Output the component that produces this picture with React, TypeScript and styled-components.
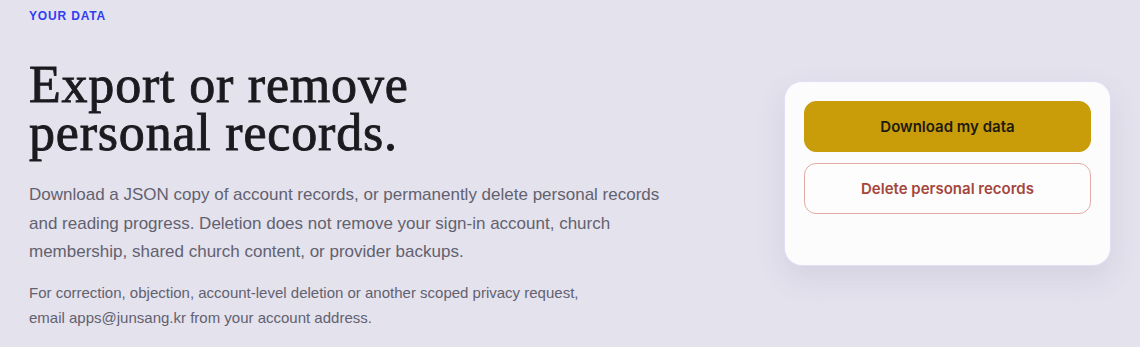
import React from "react";
import styled, { createGlobalStyle } from "styled-components";

const GlobalStyle = createGlobalStyle`
  html, body {
    margin: 0;
    padding: 0;
    background: #e4e2ed;
  }
  * { box-sizing: border-box; }
`;

const Page = styled.main`
  display: flex;
  justify-content: space-between;
  align-items: flex-start;
  padding: 8px 29px 0 29px;
  min-height: 347px;
  background: #e4e2ed;
`;

const Intro = styled.section`
  display: flex;
  flex-direction: column;
  width: 660px;
`;

const Eyebrow = styled.div`
  font-family: "Liberation Sans", Arial, sans-serif;
  font-size: 12px;
  line-height: 16px;
  font-weight: 700;
  letter-spacing: 0.07em;
  color: #2f3df2;
  text-transform: uppercase;
`;

const Heading = styled.h1`
  margin: 37px 0 0 0;
  font-family: "Liberation Serif", "Times New Roman", serif;
  font-weight: 400;
  font-size: 52px;
  line-height: 48px;
  letter-spacing: 0.8px;
  color: #1b1a1f;
  -webkit-text-stroke: 0.9px #1b1a1f;
`;

const Lead = styled.p`
  margin: 24px 0 0 0;
  font-family: "Liberation Sans", Arial, sans-serif;
  font-size: 17px;
  line-height: 28.5px;
  color: #62616f;
`;

const Note = styled.p`
  margin: 13px 0 0 0;
  font-family: "Liberation Sans", Arial, sans-serif;
  font-size: 15px;
  line-height: 25px;
  color: #62616f;
`;

const Card = styled.aside`
  margin-top: 73px;
  width: 327px;
  height: 185px;
  padding: 19px;
  display: flex;
  flex-direction: column;
  gap: 11px;
  background: #fcfcfd;
  border: 1px solid #dfe0f7;
  border-radius: 18px;
  box-shadow: 0 12px 30px rgba(90, 88, 130, 0.12);
`;

const Button = styled.button<{ $variant: "primary" | "danger" }>`
  height: 51px;
  width: 100%;
  border-radius: 12px;
  font-family: Inter, "Liberation Sans", sans-serif;
  font-size: 15px;
  font-weight: 600;
  cursor: pointer;
  border: 1px solid
    ${(p) => (p.$variant === "primary" ? "#c99d0a" : "#e3aaa5")};
  background: ${(p) => (p.$variant === "primary" ? "#c99d0a" : "#fdfdfd")};
  color: ${(p) => (p.$variant === "primary" ? "#1d1a10" : "#a5463c")};
`;

export default function App() {
  return (
    <>
      <GlobalStyle />
      <Page>
        <Intro>
          <Eyebrow>Your data</Eyebrow>
          <Heading>
            Export or remove
            <br />
            personal records.
          </Heading>
          <Lead>
            Download a JSON copy of account records, or permanently delete
            personal records and reading progress. Deletion does not remove
            your sign-in account, church membership, shared church content, or
            provider backups.
          </Lead>
          <Note>
            For correction, objection, account-level deletion or another scoped
            privacy request,
            <br />
            email apps@junsang.kr from your account address.
          </Note>
        </Intro>
        <Card>
          <Button $variant="primary">Download my data</Button>
          <Button $variant="danger">Delete personal records</Button>
        </Card>
      </Page>
    </>
  );
}
